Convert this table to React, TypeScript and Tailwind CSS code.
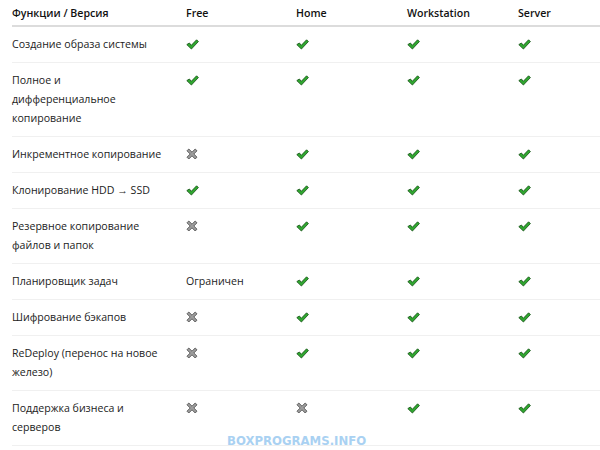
import React from "react";

type Cell = "yes" | "no" | string;

const rows: { name: string[]; cells: Cell[] }[] = [
  { name: ["Создание образа системы"], cells: ["yes", "yes", "yes", "yes"] },
  { name: ["Полное и", "дифференциальное", "копирование"], cells: ["yes", "yes", "yes", "yes"] },
  { name: ["Инкрементное копирование"], cells: ["no", "yes", "yes", "yes"] },
  { name: ["Клонирование HDD → SSD"], cells: ["yes", "yes", "yes", "yes"] },
  { name: ["Резервное копирование", "файлов и папок"], cells: ["no", "yes", "yes", "yes"] },
  { name: ["Планировщик задач"], cells: ["Ограничен", "yes", "yes", "yes"] },
  { name: ["Шифрование бэкапов"], cells: ["no", "yes", "yes", "yes"] },
  { name: ["ReDeploy (перенос на новое", "железо)"], cells: ["no", "yes", "yes", "yes"] },
  { name: ["Поддержка бизнеса и", "серверов"], cells: ["no", "no", "yes", "yes"] },
];

function Check() {
  return (
    <svg width="13" height="11" viewBox="0 0 13 11" className="mt-[4px]">
      <path
        d="M0.8 5.6 L3.4 4 L5.3 6.3 L10.6 0.8 L12.4 2.6 L5.4 10 Z"
        fill="#2fa82f"
        stroke="#1f5a1f"
        strokeWidth="0.9"
        strokeLinejoin="round"
      />
    </svg>
  );
}

function Cross() {
  return (
    <svg width="12" height="12" viewBox="0 0 12 12" className="mt-[3px]">
      <path
        d="M1 2.8 L2.8 1 L6 4.2 L9.2 1 L11 2.8 L7.8 6 L11 9.2 L9.2 11 L6 7.8 L2.8 11 L1 9.2 L4.2 6 Z"
        fill="#9c9c9c"
        stroke="#555"
        strokeWidth="0.9"
        strokeLinejoin="round"
      />
    </svg>
  );
}

const grid = "grid grid-cols-[174px_110px_111px_111px_1fr]";

export default function App() {
  return (
    <div
      className="relative w-[600px] h-[450px] overflow-hidden bg-white text-[10.6px] leading-[19px] text-[#222]"
      style={{ fontFamily: "'Open Sans', 'Noto Sans', sans-serif" }}
    >
      <div className="ml-3">
        <div className={`${grid} pt-1 pb-[2px] border-b-2 border-[#dcdcdc] font-semibold text-[#111]`}>
          <div>Функции / Версия</div>
          <div>Free</div>
          <div>Home</div>
          <div>Workstation</div>
          <div>Server</div>
        </div>
        {rows.map((r, i) => (
          <div key={i} className={`${grid} py-2 border-b border-[#f0f0f0]`}>
            <div>
              {r.name.map((l, j) => (
                <div key={j}>{l}</div>
              ))}
            </div>
            {r.cells.map((c, j) => (
              <div key={j}>
                {c === "yes" ? <Check /> : c === "no" ? <Cross /> : c}
              </div>
            ))}
          </div>
        ))}
      </div>
      <div
        className="absolute left-[227px] top-[433px] text-[13px] leading-[15px] font-bold text-[#a9d1f2]"
        style={{ fontFamily: "'DejaVu Sans Condensed', 'DejaVu Sans', sans-serif" }}
      >
        BOXPROGRAMS.INFO
      </div>
    </div>
  );
}
